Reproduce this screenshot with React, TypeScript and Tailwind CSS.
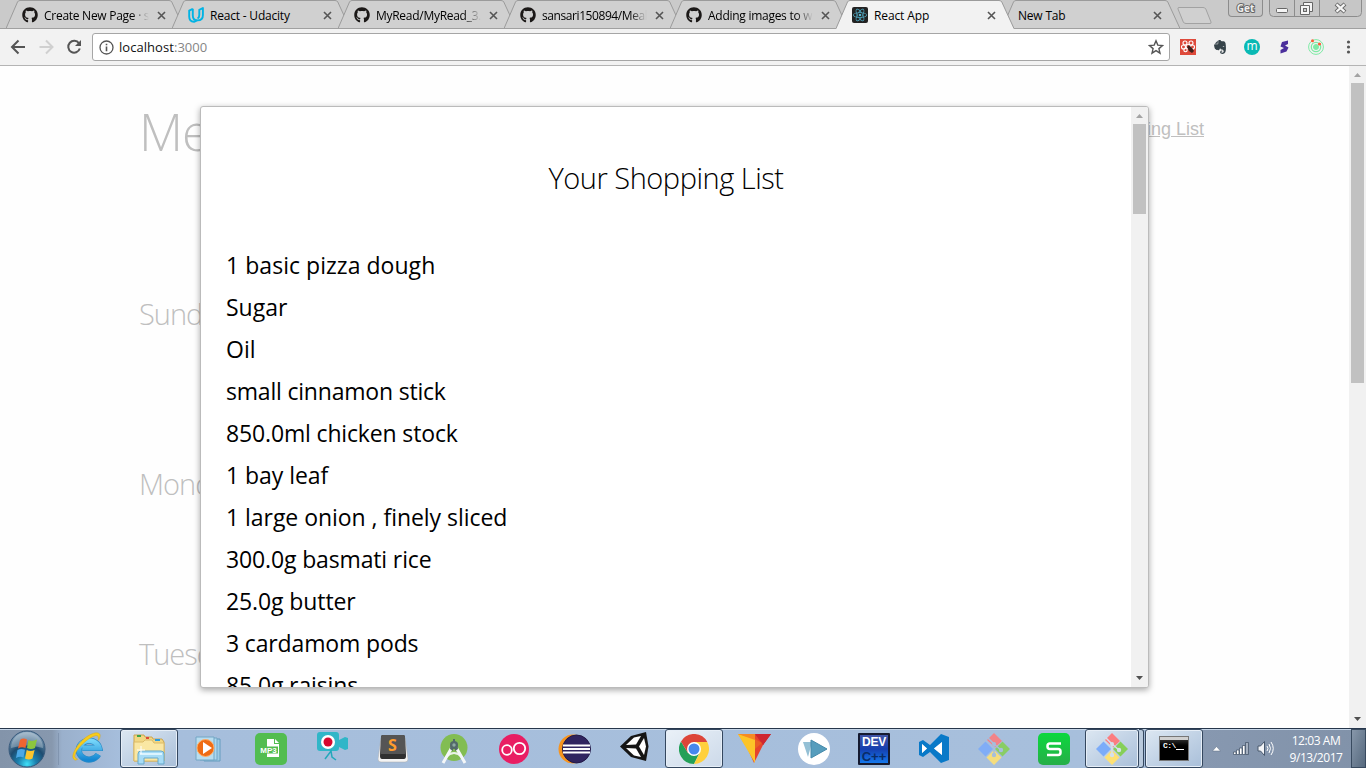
import React from "react";
import { FaGithub } from "react-icons/fa";
import { SiReact, SiEvernote } from "react-icons/si";

type Tab = { title: string; icon?: "github" | "udacity" | "react"; active?: boolean; tracking: string };

const tabs: Tab[] = [
  { title: "Create New Page · s", icon: "github", tracking: "tracking-[-0.27px]" },
  { title: "React - Udacity", icon: "udacity", tracking: "tracking-[-0.2px]" },
  { title: "MyRead/MyRead_3.", icon: "github", tracking: "tracking-[-0.28px]" },
  { title: "sansari150894/Meal", icon: "github", tracking: "tracking-[-0.42px]" },
  { title: "Adding images to w", icon: "github", tracking: "tracking-[-0.27px]" },
  { title: "React App", icon: "react", active: true, tracking: "tracking-[-0.12px]" },
  { title: "New Tab", tracking: "tracking-[-0.2px]" },
];

const items = [
  { text: "1 basic pizza dough", tracking: "tracking-[0.04px]" },
  { text: "Sugar", tracking: "tracking-[0px]" },
  { text: "Oil", tracking: "tracking-[0px]" },
  { text: "small cinnamon stick", tracking: "tracking-[-0.2px]" },
  { text: "850.0ml chicken stock", tracking: "tracking-[-0.15px]" },
  { text: "1 bay leaf", tracking: "tracking-[-0.05px]" },
  { text: "1 large onion , finely sliced", tracking: "tracking-[-0.04px]" },
  { text: "300.0g basmati rice", tracking: "tracking-[-0.14px]" },
  { text: "25.0g butter", tracking: "tracking-[-0.1px]" },
  { text: "3 cardamom pods", tracking: "tracking-[-0.14px]" },
  { text: "85.0g raisins", tracking: "tracking-[-0.14px]" },
];

function TabIcon({ kind }: { kind: Tab["icon"] }) {
  if (kind === "github") return <FaGithub className="size-4 shrink-0 text-[#1b1817]" />;
  if (kind === "udacity")
    return (
      <svg className="shrink-0" width="16" height="16" viewBox="0 0 16 16" fill="none" stroke="#02b3e4" strokeWidth="1.900" strokeLinejoin="round">
        <path d="M4.800 1.800L1.200 3.600V9.500Q1.200 14.500 6 14.800L9 13.400" />
        <path d="M4.800 1.800V8.500Q4.800 13.400 9.600 13.400Q14.900 13.400 14.900 8V1L11.300 2.800V8Q11.300 10.500 9.500 11.500" />
      </svg>
    );
  return (
    <span className="flex size-4 shrink-0 items-center justify-center rounded-[2px] bg-[#222]">
      <SiReact className="size-[14px] text-[#61dafb]/80" />
    </span>
  );
}

function TabView({ tab }: { tab: Tab }) {
  const fade = tab.title !== "React - Udacity" && tab.icon === "github";
  return (
    <div className={`relative -mr-3 h-[29px] w-[178px] shrink-0 ${tab.active ? "z-10" : ""}`}>
      <svg className="absolute inset-0" width="178" height="29" viewBox="0 0 178 29">
        <path d="M0 29 L11.5 2 Q12.3 .5 14 .5 H163 Q165 .5 165.8 2 L178 29Z" fill={tab.active ? "#f2f2f2" : "#d0d0d0"} />
        <path d="M0 28.5 L11.5 2 Q12.3 .5 14 .5 H163 Q165 .5 165.8 2 L178 28.5" fill="none" stroke="#9b9b9b" />
        {!tab.active && <path d="M0 28.5H178" stroke="#a0a0a0" />}
      </svg>
      <div className="relative flex h-[29px] items-center pl-4 pt-px">
        {tab.icon && <TabIcon kind={tab.icon} />}
        <span className={`h-[17px] whitespace-nowrap text-[12px] leading-[17px] text-black ${tab.tracking} ${tab.icon ? "ml-1.5 w-[107px]" : "w-[129px]"} ${fade ? "[mask-image:linear-gradient(to_right,#000_82%,transparent_98%)]" : ""}`}>
          {tab.title}
        </span>
        <svg className="ml-[6px]" width="9" height="9" viewBox="0 0 9 9">
          <path d="M1 1L8 8M8 1L1 8" stroke="#555" strokeWidth="1.6" />
        </svg>
      </div>
    </div>
  );
}

function WindowButtons() {
  return (
    <div className="ml-auto mr-[4px] flex items-start">
      <div className="mr-[6px] flex h-[17px] w-[35px] items-center justify-center rounded-b-[4px] border border-t-0 border-[#8c8c8c] bg-[#c6c6c6] text-[10px] font-bold leading-none text-[#eee] [-webkit-text-stroke:2px_#666] [paint-order:stroke_fill]">Get</div>
      <svg width="93" height="17" viewBox="0 0 93 17">
        <path d="M.5 0V12.5Q.5 16.5 4.5 16.5H88.500Q92.500 16.500 92.500 12.500V0M25.500 0V16M50.500 0V16" fill="#c6c6c6" stroke="#8c8c8c" />
        <rect x="7.500" y="8.500" width="11" height="4" rx="1" fill="#f5f5f5" stroke="#666" />
        <path d="M34.500 2.500H43.500V11.500H34.500Z" fill="#f5f5f5" stroke="#666" />
        <path d="M31.500 5.500H40.500V14.500H31.500Z" fill="#f5f5f5" stroke="#666" />
        <rect x="34.500" y="8.500" width="3" height="3" fill="#ccc" stroke="#666" />
        <path d="M67 4L76 12M76 4L67 12" stroke="#666" strokeWidth="4.200" />
        <path d="M67.500 4.400L75.500 11.600M75.500 4.400L67.500 11.600" stroke="#f5f5f5" strokeWidth="2.200" />
      </svg>
    </div>
  );
}

function Toolbar() {
  return (
    <div className="flex h-[37px] items-center border-b border-[#b4b4b4] bg-[#f2f2f2]">
      <svg className="ml-[10px]" width="74" height="18" viewBox="0 0 74 18" fill="none" strokeWidth="2">
        <path d="M15 9H2.500M8.500 2.500L2 9L8.500 15.500" stroke="#555" />
        <path d="M29.500 9H42M36 2.500L42.500 9L36 15.500" stroke="#d0d0d0" />
        <path d="M69 5.300A5.900 5.900 0 1 0 69.800 10.500" stroke="#555" />
        <path d="M71 2V8H65Z" fill="#555" />
      </svg>
      <div className="ml-2 flex h-7 w-[1078px] items-center rounded-[3px] border border-[#a6a6a6] bg-white pl-[6px] pr-[5px]">
        <svg width="15" height="15" viewBox="0 0 15 15" fill="none" stroke="#555">
          <circle cx="7.500" cy="7.500" r="6.500" strokeWidth="1.300" />
          <path d="M7.500 6.500V11.200M7.500 3.700V5.300" strokeWidth="1.600" />
        </svg>
        <span className="ml-[5px] text-[13px] leading-4 tracking-[0.05px] text-[#111]">localhost<span className="text-[#858585]">:3000</span></span>
        <svg className="ml-auto" width="16" height="16" viewBox="0 0 16 16">
          <path d="M8 1.800L9.800 6.100L14.500 6.500L10.900 9.600L12 14.200L8 11.700L4 14.200L5.100 9.600L1.500 6.500L6.200 6.100Z" fill="none" stroke="#555" strokeWidth="1.400" />
        </svg>
      </div>
      <div className="ml-[10px] flex items-center gap-4">
        <svg width="16" height="16" viewBox="0 0 16 16">
          <rect width="16" height="16" fill="#de4a3b" />
          <g fill="none" stroke="#fff" strokeWidth="1.100"><circle cx="8" cy="7.500" r="2" /><circle cx="5" cy="4" r="2" /><circle cx="11" cy="4" r="2" /><circle cx="3.500" cy="8" r="2" /><circle cx="12.500" cy="8" r="2" /><circle cx="5.500" cy="11" r="1.700" /></g>
          <path d="M7 8L9 6L12 9L14 12L12 14L9 12Z" fill="#40201b" />
        </svg>
        <SiEvernote className="size-[14px] w-4 text-[#36434a]" />
        <span className="flex size-4 items-center justify-center rounded-full bg-[#09b9b4] text-[12px] leading-none text-white"><span className="-mt-0.5">m</span></span>
        <svg width="16" height="16" viewBox="0 0 16 16">
          <path d="M12 1.500L6 3L4.500 7.500L8 9L4.500 11V14.500L10.500 12.500L12.500 8.500L9 6.500L12 5Z" fill="#4b2f9c" />
        </svg>
        <svg width="16" height="16" viewBox="0 0 16 16" fill="none" stroke="#7eeaa5">
          <circle cx="8" cy="8" r="7.400" /><circle cx="8" cy="8" r="4.700" strokeWidth="1.300" /><circle cx="8" cy="8" r="2.500" fill="#7eeaa5" />
          <circle cx="4.500" cy="1.800" r="1.500" fill="#ff5b37" stroke="none" /><circle cx="11.500" cy="5" r="1.600" fill="#ff5b37" stroke="none" />
        </svg>
        <svg width="16" height="16" viewBox="0 0 16 16" fill="#555">
          <circle cx="8.500" cy="3" r="1.600" /><circle cx="8.500" cy="8" r="1.600" /><circle cx="8.500" cy="13" r="1.600" />
        </svg>
      </div>
    </div>
  );
}

function Scrollbar({ thumb }: { thumb: string }) {
  return (
    <div className="flex h-full w-[17px] shrink-0 flex-col items-center bg-[#f1f1f1]">
      <svg width="17" height="17" viewBox="0 0 17 17"><path d="M5 11H12L8.500 7Z" fill="#a3a3a3" /></svg>
      <div className={`w-[13px] bg-[#c1c1c1] ${thumb}`} />
      <svg className="mt-auto" width="17" height="17" viewBox="0 0 17 17"><path d="M5 6H12L8.500 10Z" fill="#505050" /></svg>
    </div>
  );
}

function GitDiamond({ faded = false }: { faded?: boolean }) {
  const gap = faded ? "#a6bedc" : "#d5e0ec";
  return (
    <svg width="32" height="32" viewBox="0 0 32 32" opacity={faded ? 0.9 : 1}>
      <path d="M9 7L16 0L24 8L17 14.500Z" fill="#fb7d80" />
      <path d="M0 16L7.500 8.500L15 16L7.500 23.500Z" fill="#7cacf9" />
      <path d="M8.500 24.500L16 17L23.500 24.500L16 32Z" fill="#fee174" />
      <path d="M17 16L24.500 8.500L32 16L24.500 23.500Z" fill="#86cf58" />
      <path d="M10 5L16 11V22M16 11L23 17" stroke={gap} strokeWidth="1.500" fill="none" />
      <g fill={gap}><circle cx="16" cy="11" r="2" /><circle cx="16" cy="22" r="2.200" /><circle cx="23" cy="17" r="2.200" /></g>
    </svg>
  );
}

function StartOrb() {
  return (
    <svg width="38" height="38" viewBox="0 0 38 38">
      <defs>
        <radialGradient id="orb" cx="50%" cy="92%" r="85%"><stop offset="0" stopColor="#3fe0f8" /><stop offset=".3" stopColor="#1b80ae" /><stop offset=".6" stopColor="#1d4c70" /><stop offset="1" stopColor="#7f9db6" /></radialGradient>
      </defs>
      <circle cx="19" cy="19" r="18" fill="url(#orb)" stroke="#37597c" />
      <path d="M3 18A16 16 0 0 1 35 18Q19 13 3 18Z" fill="#fff" opacity=".28" />
      <path d="M12 10Q15 7.500 19 9.500L17.500 18Q13.500 16.500 10 18.500Z" fill="#ef6531" />
      <path d="M20.500 10Q24 12 29 9.500L27 18Q23 20 19 18Z" fill="#8cc63e" />
      <path d="M9.500 20Q13 18 17 19.700L15.500 27.500Q12 26 8 28Z" fill="#4ba8e6" />
      <path d="M18.700 20Q22.500 22 26.600 20L24.500 28.500Q21 30.500 17 28.500Z" fill="#fcc52c" />
    </svg>
  );
}

function AppIcon({ name }: { name: string }) {
  switch (name) {
    case "ie":
      return (
        <svg className="-ml-1 -mt-1" width="32" height="32" viewBox="0 0 34 34">
          <defs><linearGradient id="ie" x2="0" y2="1"><stop stopColor="#76d6fa" /><stop offset="1" stopColor="#1687d2" /></linearGradient></defs>
          <path d="M29 25A11 10 0 1 1 30 18H12" fill="none" stroke="#2c8ac5" strokeWidth="6.600" />
          <path d="M29 25A11 10 0 1 1 30 18H12" fill="none" stroke="url(#ie)" strokeWidth="5.200" />
          <path d="M5 31C-2 30 4 17 13 9S31 0 31 5Q31 8 29 10Q30 4 26 5C19 6 4 20 4 27Q4 29 7 30Z" fill="#f8cc1b" stroke="#d6a513" strokeWidth=".5" />
        </svg>
      );
    case "folder":
      return (
        <svg width="34" height="32" viewBox="0 0 34 32">
          <path d="M2 6V2H12L13 4H20L21 6H30L32 9V28H2Z" fill="#f2d783" stroke="#caa550" />
          <path d="M2 9H11L13 7H20L22 10H32V28H2Z" fill="#fae7a3" stroke="#dcbb68" />
          <path d="M5 3H9" stroke="#3ca44a" strokeWidth="2" /><path d="M14 5H17" stroke="#dd4a34" strokeWidth="2" /><path d="M23 7H28" stroke="#2a9ce0" strokeWidth="2" />
          <path d="M6 31V21Q6 18 9 18H29Q32 18 32 21V31H26V25H12V31Z" fill="#a7dcf6" stroke="#66a9cb" />
          <path d="M8 21H30" stroke="#dcf4ff" strokeWidth="2" /><path d="M9 13V21M5 17H13" stroke="#fff" />
        </svg>
      );
    case "media":
      return (
        <svg width="30" height="28" viewBox="0 0 30 28">
          <path d="M9 4H25V26H9Z" fill="#9dcbe6" stroke="#659cbd" /><path d="M5 3H22V25H5Z" fill="#acd8ef" stroke="#73a6c5" /><path d="M1 2H19V25H1Z" fill="#b8ddef" stroke="#73a6c5" />
          <circle cx="10.500" cy="13" r="8.500" fill="#ef6b13" stroke="#ffad66" /><path d="M8 7V19L17 13Z" fill="#fff" />
        </svg>
      );
    case "mp3":
      return (
        <div className="flex size-8 items-center justify-center rounded-[5px] bg-[#52bd50]">
          <div className="relative flex h-[19px] w-[22px] items-center justify-center">
            <svg className="absolute inset-0" width="22" height="19"><path d="M7 0H14V5H19V18H7Z" fill="#fff" /><path d="M15 0L19 4H15Z" fill="#fff" /><path d="M0 7.500H18V14.500H0Z" fill="#52bd50" /></svg>
            <span className="relative -ml-1 mt-[4px] font-['Liberation_Sans'] text-[8px] font-bold leading-none text-white">MP3</span>
          </div>
        </div>
      );
    case "camera":
      return (
        <svg className="-mt-1" width="32" height="29" viewBox="0 0 32 29">
          <path d="M1 3Q1 0 4 0H20Q23 0 23 3V8L29 5L32 6V17L29 18L23 15V16Q23 19 20 19H4Q1 19 1 16Z" fill="#30b6c8" />
          <circle cx="12" cy="10" r="7" fill="#fff" /><circle cx="12" cy="10" r="4.500" fill="#d7082e" /><path d="M9 27L15 19L16 25L20 28" stroke="#23a8bb" strokeWidth="1.500" fill="none" />
        </svg>
      );
    case "sublime":
      return (
        <div className="relative flex h-[28px] w-[30px] items-start justify-center">
          <svg className="absolute inset-0" width="30" height="28" viewBox="0 0 30 28">
            <path d="M3 3H27L30 24Q30 27 27 27H3Q0 27 0 24Z" fill="#f4f4f4" stroke="#aaa" strokeWidth=".5" />
            <path d="M5 0H25Q27 0 27 2L28 21Q28 24 26 24H4Q2 24 2 21L3 2Q3 0 5 0Z" fill="#303030" />
            <path d="M5 0H25Q27 0 27 2V19H3V2Q3 0 5 0Z" fill="#555" />
          </svg>
          <span className="relative mt-[1px] text-[16px] font-bold leading-[18px] text-[#ff9c2d]">S</span>
        </div>
      );
    case "android":
      return (
        <svg width="30" height="32" viewBox="0 0 30 32">
          <circle cx="15" cy="14.500" r="13.500" fill="#82bd52" />
          <path d="M7 24Q15 16 23 24" stroke="#e9f2e6" strokeWidth="2" fill="none" />
          <path d="M12.500 15L4 30M17.500 15L26 30" stroke="#f4f7f8" strokeWidth="3" fill="none" />
          <path d="M14 6H16V9H18L19 16L16 18V15H14V18L11 16L12 9H14Z" fill="#536a69" /><circle cx="15" cy="12" r="4" fill="#536a69" /><circle cx="15" cy="12" r="1.700" fill="#8daaa1" />
        </svg>
      );
    case "oo":
      return <svg width="30" height="30" viewBox="0 0 30 30" fill="none" stroke="#fff" strokeWidth="1.800"><circle cx="15" cy="15" r="15" fill="#e91e63" stroke="none" /><circle cx="8" cy="16" r="4.800" /><circle cx="20.500" cy="14.500" r="5.700" /></svg>;
    case "eclipse":
      return (
        <svg width="33" height="30" viewBox="0 0 33 30">
          <circle cx="15" cy="15" r="14.500" fill="#f7941e" /><circle cx="18.500" cy="15" r="14" fill="#302560" stroke="#241a47" /><path d="M5 11.500H32M5 15H32M5 18.500H32" stroke="#fff" strokeWidth="2" />
        </svg>
      );
    case "unity":
      return (
        <svg className="-mt-1" width="29" height="31" viewBox="0 0 29 31">
          <path d="M0 15.500L11 5L26 1L28.500 15.500L26 30L11 26Z" fill="#151515" />
          <path d="M6 14L14 6.500L21 5L16 13.500Z" fill="#fff" /><path d="M24 7L26 15.500L24 24L19 15.500Z" fill="#fff" /><path d="M6 17L14 24.500L21 26L16 17.500Z" fill="#fff" />
        </svg>
      );
    case "chrome":
      return (
        <svg width="30" height="30" viewBox="0 0 30 30">
          <path d="M2 7.500A15 15 0 0 0 15 30L21 18L9 19Z" fill="#23a058" />
          <path d="M15 8H28.300A15 15 0 0 1 15 30L21 18Z" fill="#ffd03c" />
          <path d="M2 7.500A15 15 0 0 1 28.300 8H15L9 19Z" fill="#dd4539" />
          <circle cx="15" cy="15" r="7" fill="#fff" /><circle cx="15" cy="15" r="5.500" fill="#4788ed" />
        </svg>
      );
    case "gem":
      return (
        <svg width="33" height="29" viewBox="0 0 33 29">
          <path d="M0 0H17L7 11Z" fill="#fb9a26" /><path d="M17 0H33L25 11Z" fill="#b91d24" /><path d="M17 0L7 9L16 29L26 9Z" fill="#e6432d" /><path d="M0 0L17 5V29Z" fill="#fdc428" /><path d="M0 0H17V6Z" fill="#f58a25" /><path d="M17 0L25 11L33 0Z" fill="#cf2730" /><path d="M17 5L24 9L17 15Z" fill="#e95f25" />
        </svg>
      );
    case "play":
      return <svg width="32" height="32" viewBox="0 0 32 32"><circle cx="16" cy="16" r="16" fill="#fff" /><path d="M5 9H14L10 24Z" fill="#94c0d5" /><path d="M13 7L29 16L13 25Z" fill="#569dbd" stroke="#4489aa" /></svg>;
    case "dev":
      return (
        <div className="flex size-8 flex-col items-center rounded-[1px] border-2 border-[#151a30] bg-gradient-to-b from-[#4055a7] via-[#153fb0] to-[#1578ed] font-['Liberation_Sans']">
          <b className="text-[12px] leading-[15px] tracking-[-0.3px] text-white">DEV</b><b className="text-[13px] leading-[13px] text-[#092c68]">C++</b>
        </div>
      );
    case "code":
      return (
        <svg width="31" height="29" viewBox="0 0 31 29"><path fillRule="evenodd" d="M22 0L30 3V26L22 29L11 18L4 23L0 21V8L4 6L11 11Z M23 8L15 14.500L23 21Z M3 10V19L8 14.500Z" fill="#0879c8" /><path d="M23 8L15 14.500L23 21Z M3 10V19L8 14.500Z" fill="#fff" /></svg>
      );
    case "green":
      return (
        <svg width="32" height="32" viewBox="0 0 32 32"><defs><linearGradient id="green" x2="0" y2="1"><stop stopColor="#0bd83d" /><stop offset="1" stopColor="#27ae49" /></linearGradient></defs><rect width="32" height="32" rx="5" fill="url(#green)" /><path d="M23 10.500H12Q9.500 10.500 9.500 13V13.500Q9.500 16 12 16H20Q22.500 16 22.500 18.500V19.500Q22.500 22 20 22H9" fill="none" stroke="#fff" strokeWidth="2.500" /></svg>
      );
    case "cmd":
      return (
        <div className="mb-px flex h-[25px] w-[30px] flex-col border border-[#777] bg-black bg-gradient-to-b from-[#444] to-black to-50%">
          <div className="h-[3px] shrink-0 bg-[#d0d0d0]" />
          <div className="ml-[3px] mt-[2px] flex items-end"><span className="font-['Liberation_Mono'] text-[8px] font-bold leading-[8px] tracking-[-0.5px] text-white">C:\</span><span className="h-px w-[8px] bg-white" /></div>
        </div>
      );
    case "git":
      return <GitDiamond faded />;
    default:
      return <GitDiamond />;
  }
}

const apps = ["ie", "folder", "media", "mp3", "camera", "sublime", "android", "oo", "eclipse", "unity", "chrome", "gem", "play", "dev", "code", "git", "green", "gitActive", "cmd"];

function Taskbar() {
  return (
    <div className="flex h-10 border-t border-[#26364b] bg-[linear-gradient(to_right,#8394aa_0,#8798ae_52px,#9ab0cc_62px,#a6bedc_120px,#a7bfdc_1135px,#8798b0_1200px,#8192a9_100%)] shadow-[inset_0_1px_0_#c6d6e8]">
      <div className="flex w-[59px] items-center pl-2"><StartOrb /><div className="ml-auto h-8 w-px bg-[#7488a3]/60" /></div>
      {apps.map((app, i) => {
        const open = app === "folder" || app === "chrome" || app === "gitActive" || app === "cmd";
        const stacked = app === "gitActive";
        return (
          <div key={app} className={`flex shrink-0 items-center justify-center ${i >= 2 && i <= 6 ? "w-[61px]" : "w-[60px]"}`}>
            <div className={`flex h-[39px] items-center justify-center ${open ? "rounded-[3px] border border-[#34475f] bg-gradient-to-br shadow-[inset_0_0_0_1px_#e6eef7]" : ""} ${app === "chrome" ? "from-[#eaf1f8] to-[#ccd9e9]" : "from-[#dce7f2] to-[#a9bfd9]"} ${stacked ? "w-[54px]" : "w-[58px]"}`}>
              <AppIcon name={app} />
            </div>
            {stacked && <div className="h-[39px] w-[5px] rounded-r-[3px] border border-l-0 border-[#34475f] bg-[#b9cadd]" />}
          </div>
        );
      })}
      <div className="flex flex-1 items-center text-white">
        <svg className="ml-[8px]" width="9" height="6" viewBox="0 0 9 6"><path d="M.5 5L4.500 .5L8.500 5Z" fill="#fff" stroke="#5c6c81" strokeWidth=".5" /></svg>
        <svg className="ml-[12px]" width="16" height="13" viewBox="0 0 16 13" fill="#fff" stroke="#3e4e63" strokeWidth=".7"><path d="M.5 10H3V12.500H.5ZM3.500 8H6V12.500H3.500ZM6.500 6H9V12.500H6.500ZM9.500 3.500H12V12.500H9.500Z" /><path d="M12.500 .5H15.500V12.500H12.500Z" fill="#a5b0bf" /></svg>
        <svg className="ml-[8px]" width="17" height="15" viewBox="0 0 17 15" fill="none" stroke="#fff"><path d="M1 5H3.500L7.500 .5V14.500L3.500 10H1Z" fill="#f3f5f8" stroke="#48586d" /><path d="M10 5Q12 7.500 10 10M12 3Q15 7.500 12 12M14 1Q18.500 7.500 14 14" /></svg>
        <div className="ml-[15px] w-[54px] whitespace-nowrap text-center text-[12px] leading-[17px] tracking-[-0.42px]"><div>12:03 AM</div><div>9/13/2017</div></div>
      </div>
      <div className="w-[15px] border border-[#394b60] bg-gradient-to-br from-[#8797aa] to-[#56697e]" />
    </div>
  );
}

export default function App() {
  return (
    <div className="flex h-[768px] w-[1366px] flex-col overflow-hidden bg-white font-['Open_Sans','Noto_Sans',sans-serif]">
      <div className="flex h-[29px] shrink-0 bg-[#cacaca] pl-[6px] shadow-[inset_0_-1px_0_#a0a0a0]">
        {tabs.map((tab) => <TabView key={tab.title} tab={tab} />)}
        <svg className="ml-[9px] mt-[7px]" width="35" height="18" viewBox="0 0 35 18"><path d="M2 .5H26Q28 .5 28.800 2L34 15Q34.500 16.500 33 16.500H9Q7 16.500 6.300 15L1 2Q.5 .5 2 .5Z" fill="#d0d0d0" stroke="#a2a2a2" /></svg>
        <WindowButtons />
      </div>
      <Toolbar />
      <main className="relative flex h-[662px] shrink-0 bg-[#fefefe]">
        <div className="flex-1 pl-[139px] pr-[140px] pt-[27px] text-[#bfbfbf]">
          <div className="flex justify-between">
            <h1 className="text-[51px] font-light leading-[76px] tracking-[-1px]">Meals</h1>
            <a className="mr-[5px] mt-[25px] font-['Liberation_Sans'] text-[18px] leading-[22px] underline">Shopping List</a>
          </div>
          <div className="mt-[125px] flex flex-col gap-[130px] text-[29px] font-light leading-[40px] tracking-[-1px]">
            <h3>Sunday</h3><h3>Monday</h3><h3>Tuesday</h3>
          </div>
        </div>
        <Scrollbar thumb="h-[300px]" />
        <section className="absolute left-[200px] top-[40px] flex h-[582px] w-[949px] overflow-hidden rounded-[3px] border border-[#bbb] bg-white shadow-[0_2px_6px_rgba(0,0,0,0.35)]">
          <div className="flex-1 overflow-hidden px-[25px] pt-[51px] text-black">
            <h2 className="text-center text-[29px] font-light leading-[40px] tracking-[-0.48px]">Your Shopping List</h2>
            <ul className="mt-[46px]">
              {items.map((item) => <li key={item.text} className={`h-[42px] whitespace-nowrap text-[23px] leading-[42px] ${item.tracking}`}>{item.text}</li>)}
            </ul>
          </div>
          <Scrollbar thumb="h-[90px]" />
        </section>
      </main>
      <Taskbar />
    </div>
  );
}
